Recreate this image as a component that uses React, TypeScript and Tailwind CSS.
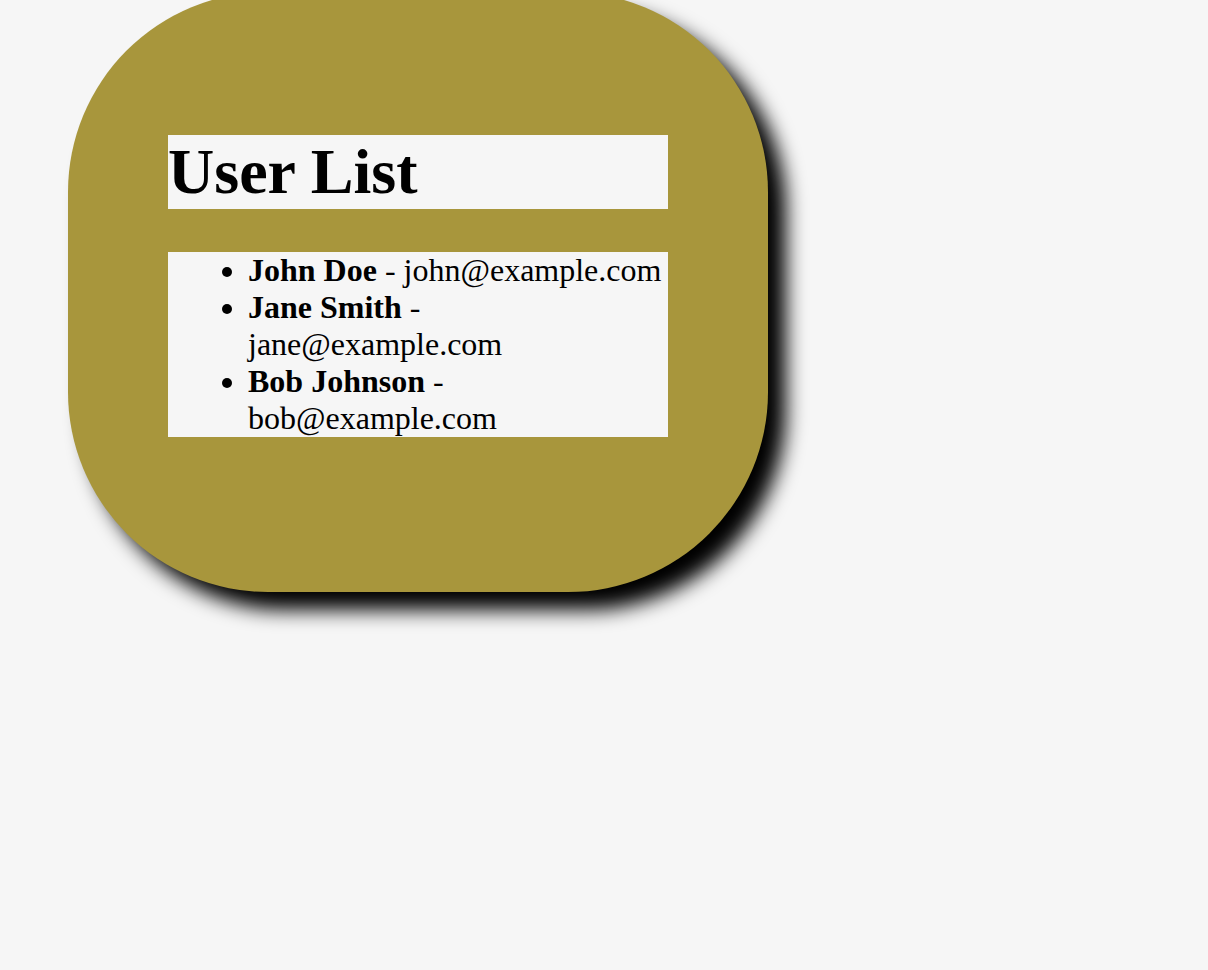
import React from "react";

interface User {
  name: string;
  email: string;
}

const users: User[] = [
  { name: "John Doe", email: "john@example.com" },
  { name: "Jane Smith", email: "jane@example.com" },
  { name: "Bob Johnson", email: "bob@example.com" },
];

export default function App() {
  return (
    <div className="flex min-h-screen flex-col bg-[#f6f6f6] font-['Liberation_Serif','Times_New_Roman',serif] text-black">
      {/* Card */}
      <div className="-mt-[8px] ml-[68px] h-[600px] w-[700px] rounded-[200px] bg-[#a8963c] p-[100px] shadow-[18px_18px_20px_#000]">
        <h1 className="my-[43px] bg-[#f6f6f6] text-[64px] font-bold leading-[74px]">
          User List
        </h1>
        <ul className="my-[32px] list-disc bg-[#f6f6f6] pl-[80px] text-[32px] leading-[37px]">
          {users.map((user) => (
            <li key={user.email}>
              <strong className="font-bold">{user.name}</strong> - {user.email}
            </li>
          ))}
        </ul>
      </div>
    </div>
  );
}
